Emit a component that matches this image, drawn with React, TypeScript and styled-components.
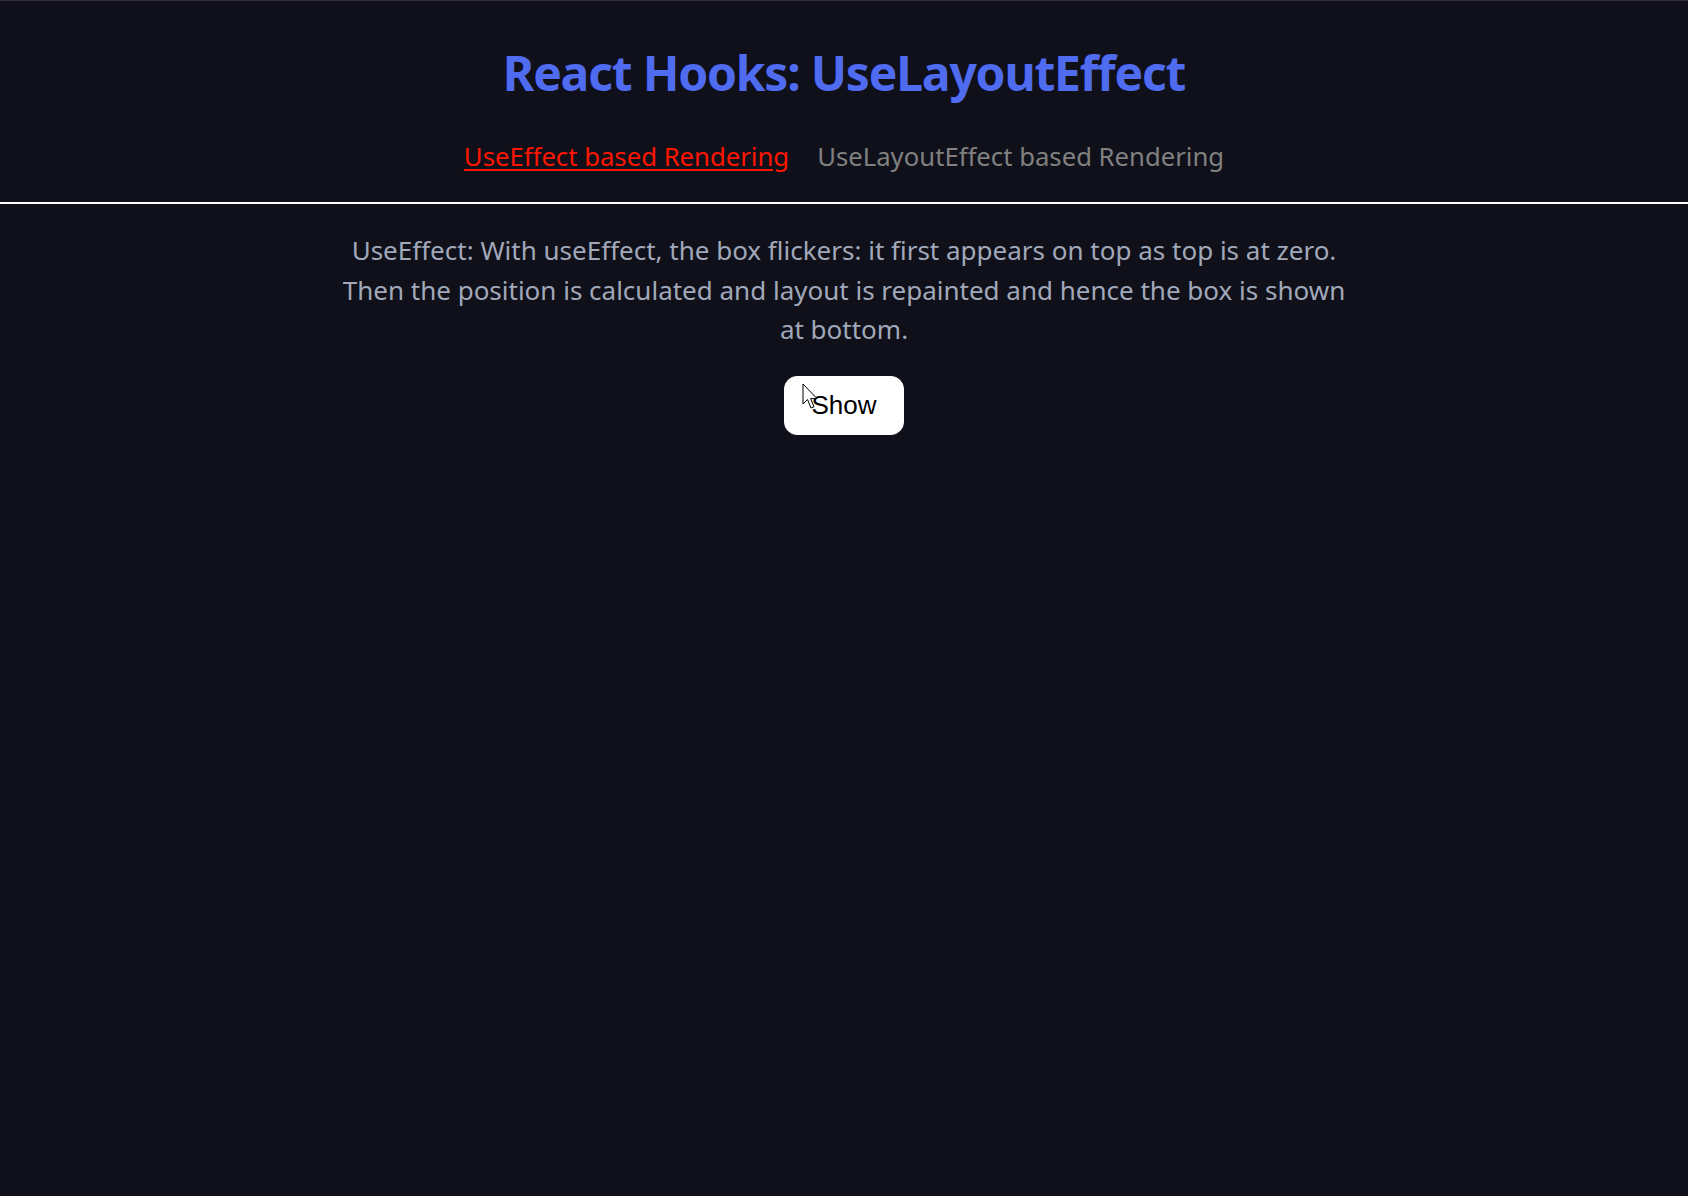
import styled, { createGlobalStyle } from 'styled-components';

const GlobalStyle = createGlobalStyle`
   html, body {
      margin: 0;
      padding: 0;
      background-color: #0f101a;
   }
   body {
      font-family: 'Noto Sans', 'Open Sans', sans-serif;
      border-top: 1px solid #2d2940;
      min-height: 1195px;
   }
`;

const Page = styled.div`
   display: flex;
   flex-direction: column;
   align-items: center;
`;

const Header = styled.header`
   width: 100%;
   display: flex;
   flex-direction: column;
   align-items: center;
   padding-top: 44px;
   border-bottom: 2px solid #ffffff;
`;

const Title = styled.h1`
   margin: 0;
   font-size: 48px;
   line-height: 55px;
   font-weight: 700;
   letter-spacing: -0.025em;
   color: #4f6bf0;
`;

const Nav = styled.nav`
   display: flex;
   gap: 28px;
   margin: 40.5px 0 30.5px;
`;

const NavLink = styled.a<{ $active?: boolean }>`
   font-size: 25.7px;
   line-height: 31px;
   color: ${({ $active }) => ($active ? '#ff1500' : '#808080')};
   text-decoration: ${({ $active }) => ($active ? 'underline' : 'none')};
   text-underline-offset: 3px;
   cursor: pointer;
`;

const Content = styled.main`
   display: flex;
   flex-direction: column;
   align-items: center;
   padding-top: 27px;
`;

const Description = styled.p`
   margin: 0 0 26.5px;
   max-width: 1026px;
   text-align: center;
   font-size: 26px;
   line-height: 39.5px;
   color: #a1a8b9;
`;

const ButtonWrap = styled.div`
   position: relative;
`;

const ShowButton = styled.button`
   font-family: 'Liberation Sans', Arial, sans-serif;
   font-size: 26px;
   padding: 13px 26px;
   border: 1px solid #ffffff;
   border-radius: 13px;
   background-color: #ffffff;
   color: #000000;
   cursor: pointer;
`;

const Cursor = styled.svg`
   position: absolute;
   left: 18px;
   top: 7px;
   pointer-events: none;
`;

const App = () => {
   return (
      <Page>
         <GlobalStyle />
         <Header>
            <Title>React Hooks: UseLayoutEffect</Title>
            <Nav>
               <NavLink $active>UseEffect based Rendering</NavLink>
               <NavLink>UseLayoutEffect based Rendering</NavLink>
            </Nav>
         </Header>
         <Content>
            <Description>
               UseEffect: With useEffect, the box flickers: it first appears on top as top is at zero. Then the
               position is calculated and layout is repainted and hence the box is shown at bottom.
            </Description>
            <ButtonWrap>
               <ShowButton>Show</ShowButton>
               <Cursor width="17" height="27" viewBox="0 0 17 27">
                  <path
                     d="M1 1 L1 21 L5.5 16.5 L9 25 L12 23.8 L8.6 15.6 L15 15.6 Z"
                     fill="#ffffff"
                     stroke="#000000"
                     strokeWidth="1"
                     strokeLinejoin="round"
                  />
               </Cursor>
            </ButtonWrap>
         </Content>
      </Page>
   );
};

export default App;
